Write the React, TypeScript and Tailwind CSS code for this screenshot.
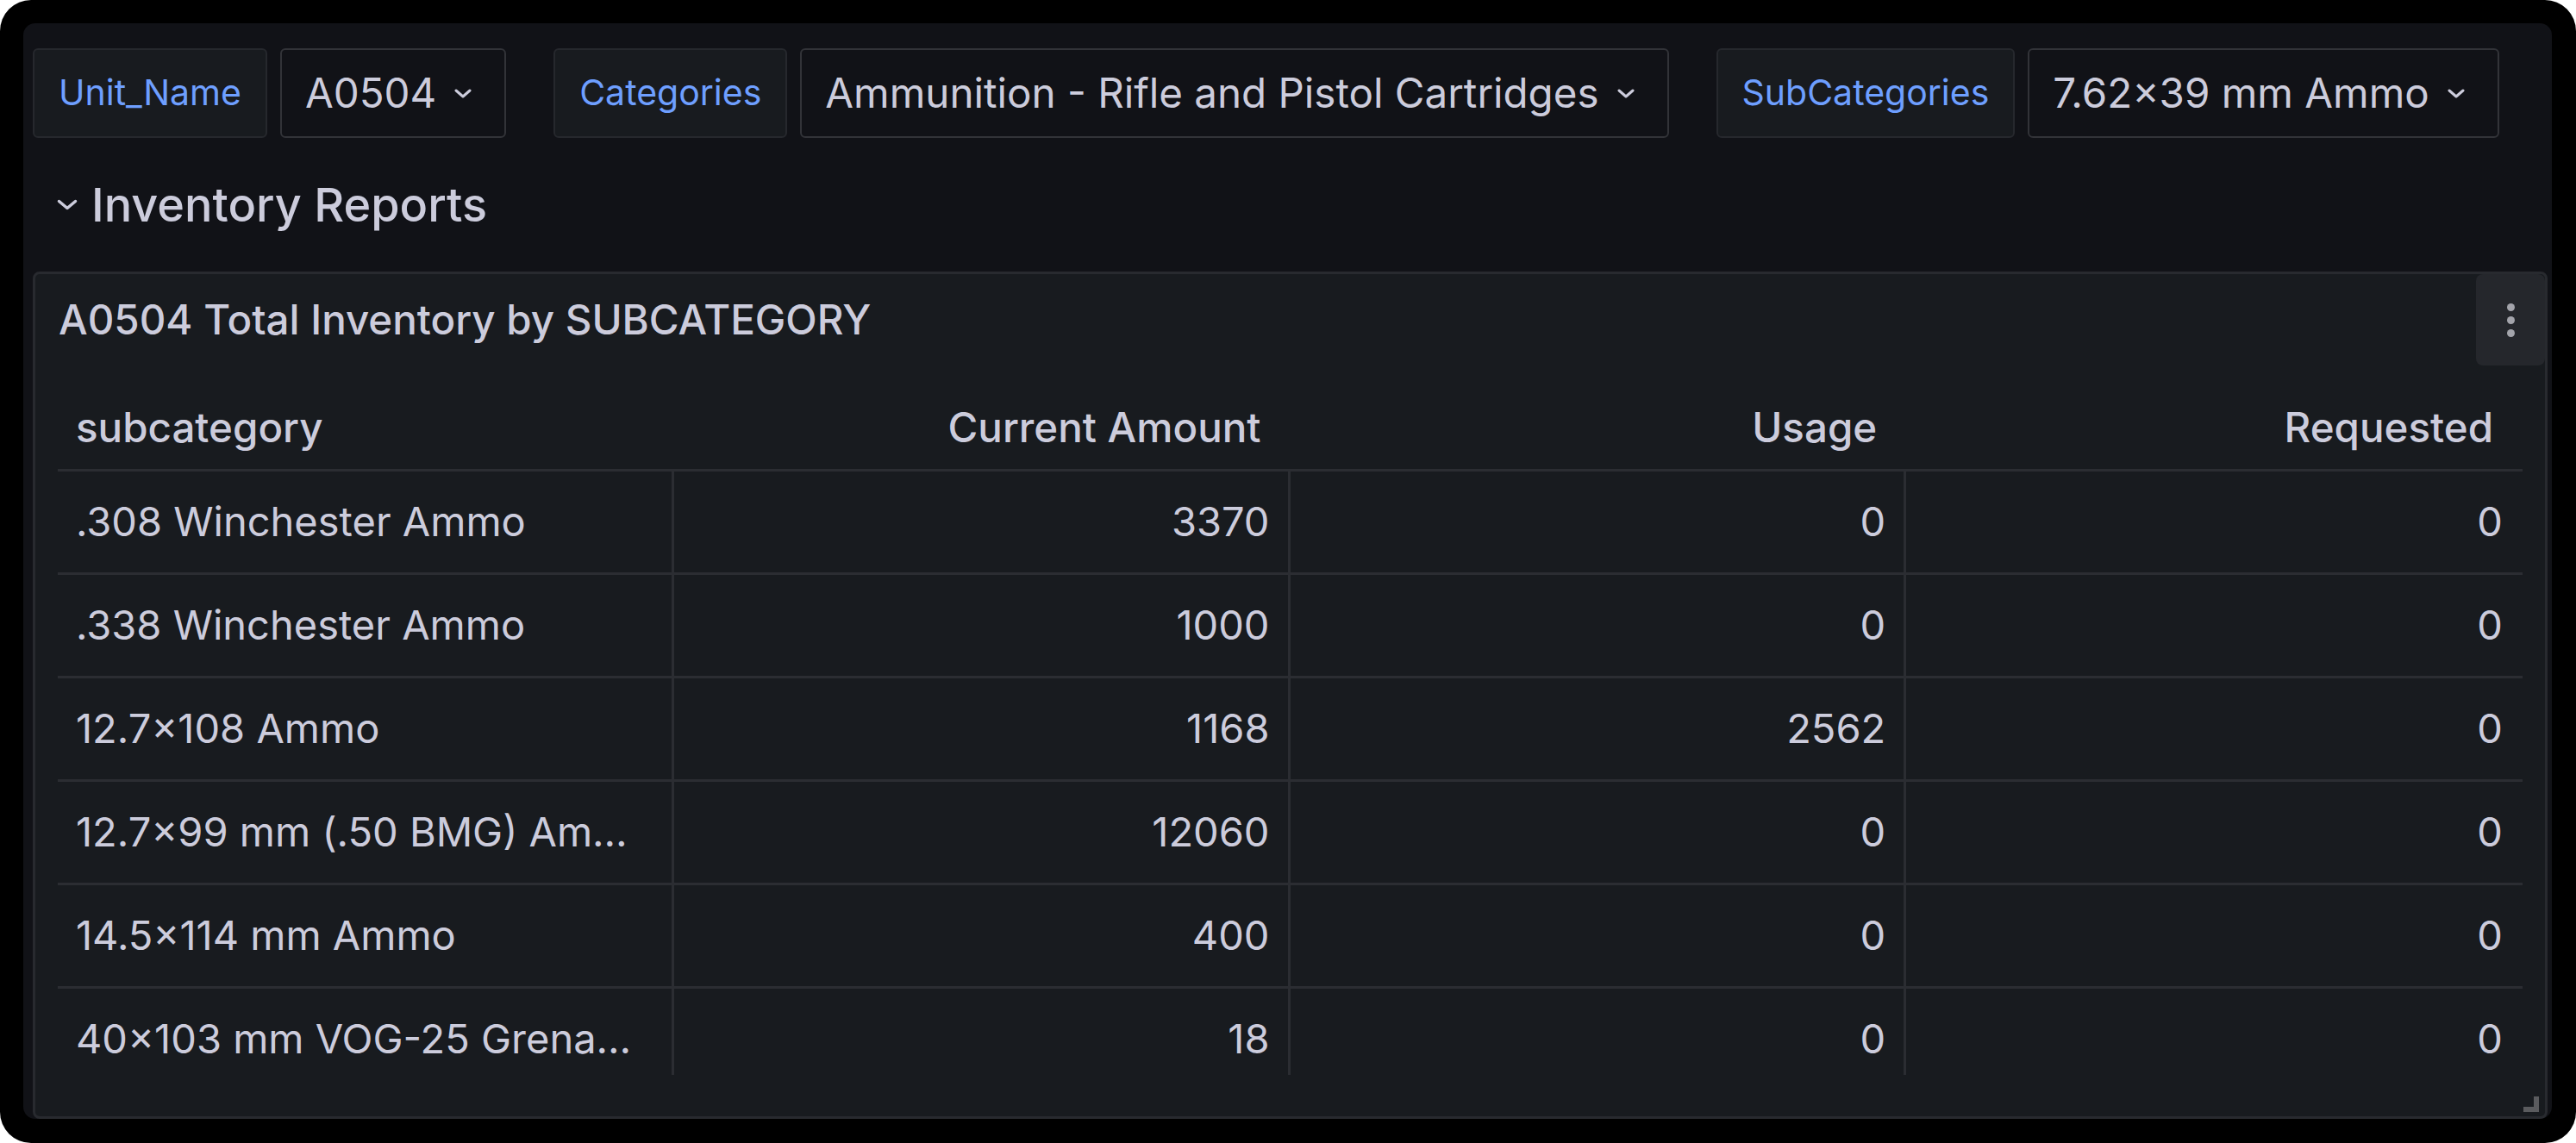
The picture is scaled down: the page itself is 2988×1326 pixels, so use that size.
import React from "react";

const rows = [
  [".308 Winchester Ammo", "3370", "0", "0"],
  [".338 Winchester Ammo", "1000", "0", "0"],
  ["12.7×108 Ammo", "1168", "2562", "0"],
  ["12.7×99 mm (.50 BMG) Am…", "12060", "0", "0"],
  ["14.5×114 mm Ammo", "400", "0", "0"],
  ["40×103 mm VOG-25 Grena…", "18", "0", "0"],
];

function Chevron({ className }: { className?: string }) {
  return (
    <svg viewBox="0 0 20 11" className={className} fill="none">
      <path d="M2 2l8 7 8-7" stroke="#ccccdc" strokeWidth="3" strokeLinecap="round" strokeLinejoin="round" />
    </svg>
  );
}

function Variable({ label, value }: { label: string; value: string }) {
  return (
    <div className="flex h-full gap-[15px]">
      <div className="flex h-full items-center rounded-[6px] border-2 border-[#26282d] bg-[#181b1f] pl-[28px] pr-[28px] text-[41px] text-[#6e9fff]">
        {label}
      </div>
      <div className="flex h-full items-center gap-[21px] rounded-[6px] border-2 border-[#323338] bg-[#111217] pl-[27px] pr-[38px] text-[47.5px] text-[#ccccdc]">
        <span>{value}</span>
        <Chevron className="w-[20px] h-[11px]" />
      </div>
    </div>
  );
}

export default function App() {
  return (
    <div className="w-[2988px] h-[1326px] bg-white font-['Inter','Noto_Sans',sans-serif]">
      <div className="h-full w-full rounded-[36px] bg-black pl-[27px] pt-[27px] pr-[28px] pb-[28px]">
        <div className="flex h-full flex-col overflow-hidden rounded-[14px] bg-[#111217] pl-[11px] pr-[5px] pt-[29px]">
          {/* variables */}
          <div className="flex h-[104px] shrink-0 gap-[55px]">
            <Variable label="Unit_Name" value="A0504" />
            <Variable label="Categories" value="Ammunition - Rifle and Pistol Cartridges" />
            <Variable label="SubCategories" value="7.62×39 mm Ammo" />
          </div>

          {/* row title */}
          <div className="flex h-[155px] shrink-0 items-center gap-[16px] pl-[28px] text-[54px] font-medium text-[#ccccdc]">
            <svg viewBox="0 0 24 13" className="w-[24px] h-[13px]" fill="none">
              <path d="M2.5 2.5l9.5 8 9.5-8" stroke="#ccccdc" strokeWidth="3.5" strokeLinecap="round" strokeLinejoin="round" />
            </svg>
            <span>Inventory Reports</span>
          </div>

          {/* panel */}
          <div className="relative flex min-h-0 flex-1 flex-col rounded-[8px] border-[3px] border-[#282a2f] bg-[#181b1f]">
            <div className="flex h-[106px] shrink-0 items-center pl-[27px] text-[47.5px] font-medium text-[#ccccdc]">
              A0504 Total Inventory by SUBCATEGORY
            </div>
            <button className="absolute right-0 top-0 flex h-[106px] w-[80px] flex-col items-center justify-center gap-[6px] rounded-[8px] bg-[#25272c]">
              <span className="h-[9px] w-[9px] rounded-full bg-[#a3a4ab]" />
              <span className="h-[9px] w-[9px] rounded-full bg-[#a3a4ab]" />
              <span className="h-[9px] w-[9px] rounded-full bg-[#a3a4ab]" />
            </button>

            <div className="mx-[26px] mt-[23px] h-[800px] shrink-0 overflow-hidden text-[47px] text-[#ccccdc]">
              <div className="grid h-[100px] grid-cols-4 items-center border-b-[3px] border-[#2b2d32] text-[47.5px] font-medium">
                <div className="pl-[21px]">subcategory</div>
                <div className="pr-[34px] text-right">Current Amount</div>
                <div className="pr-[34px] text-right">Usage</div>
                <div className="pr-[34px] text-right">Requested</div>
              </div>
              {rows.map((r) => (
                <div key={r[0]} className="grid h-[120px] shrink-0 grid-cols-4 border-b-[3px] border-[#2b2d32]">
                  <div className="flex items-center overflow-hidden whitespace-nowrap border-r-[3px] border-[#2b2d32] px-[21px]">{r[0]}</div>
                  <div className="flex items-center justify-end border-r-[3px] border-[#2b2d32] px-[21px]">{r[1]}</div>
                  <div className="flex items-center justify-end border-r-[3px] border-[#2b2d32] px-[21px]">{r[2]}</div>
                  <div className="flex items-center justify-end px-[23px]">{r[3]}</div>
                </div>
              ))}
            </div>

            <svg viewBox="0 0 18 18" className="absolute bottom-[5px] right-[7px] h-[18px] w-[18px]">
              <path d="M12 0h6v18H0v-6h12z" fill="#5a5b5e" />
            </svg>
          </div>
        </div>
      </div>
    </div>
  );
}
